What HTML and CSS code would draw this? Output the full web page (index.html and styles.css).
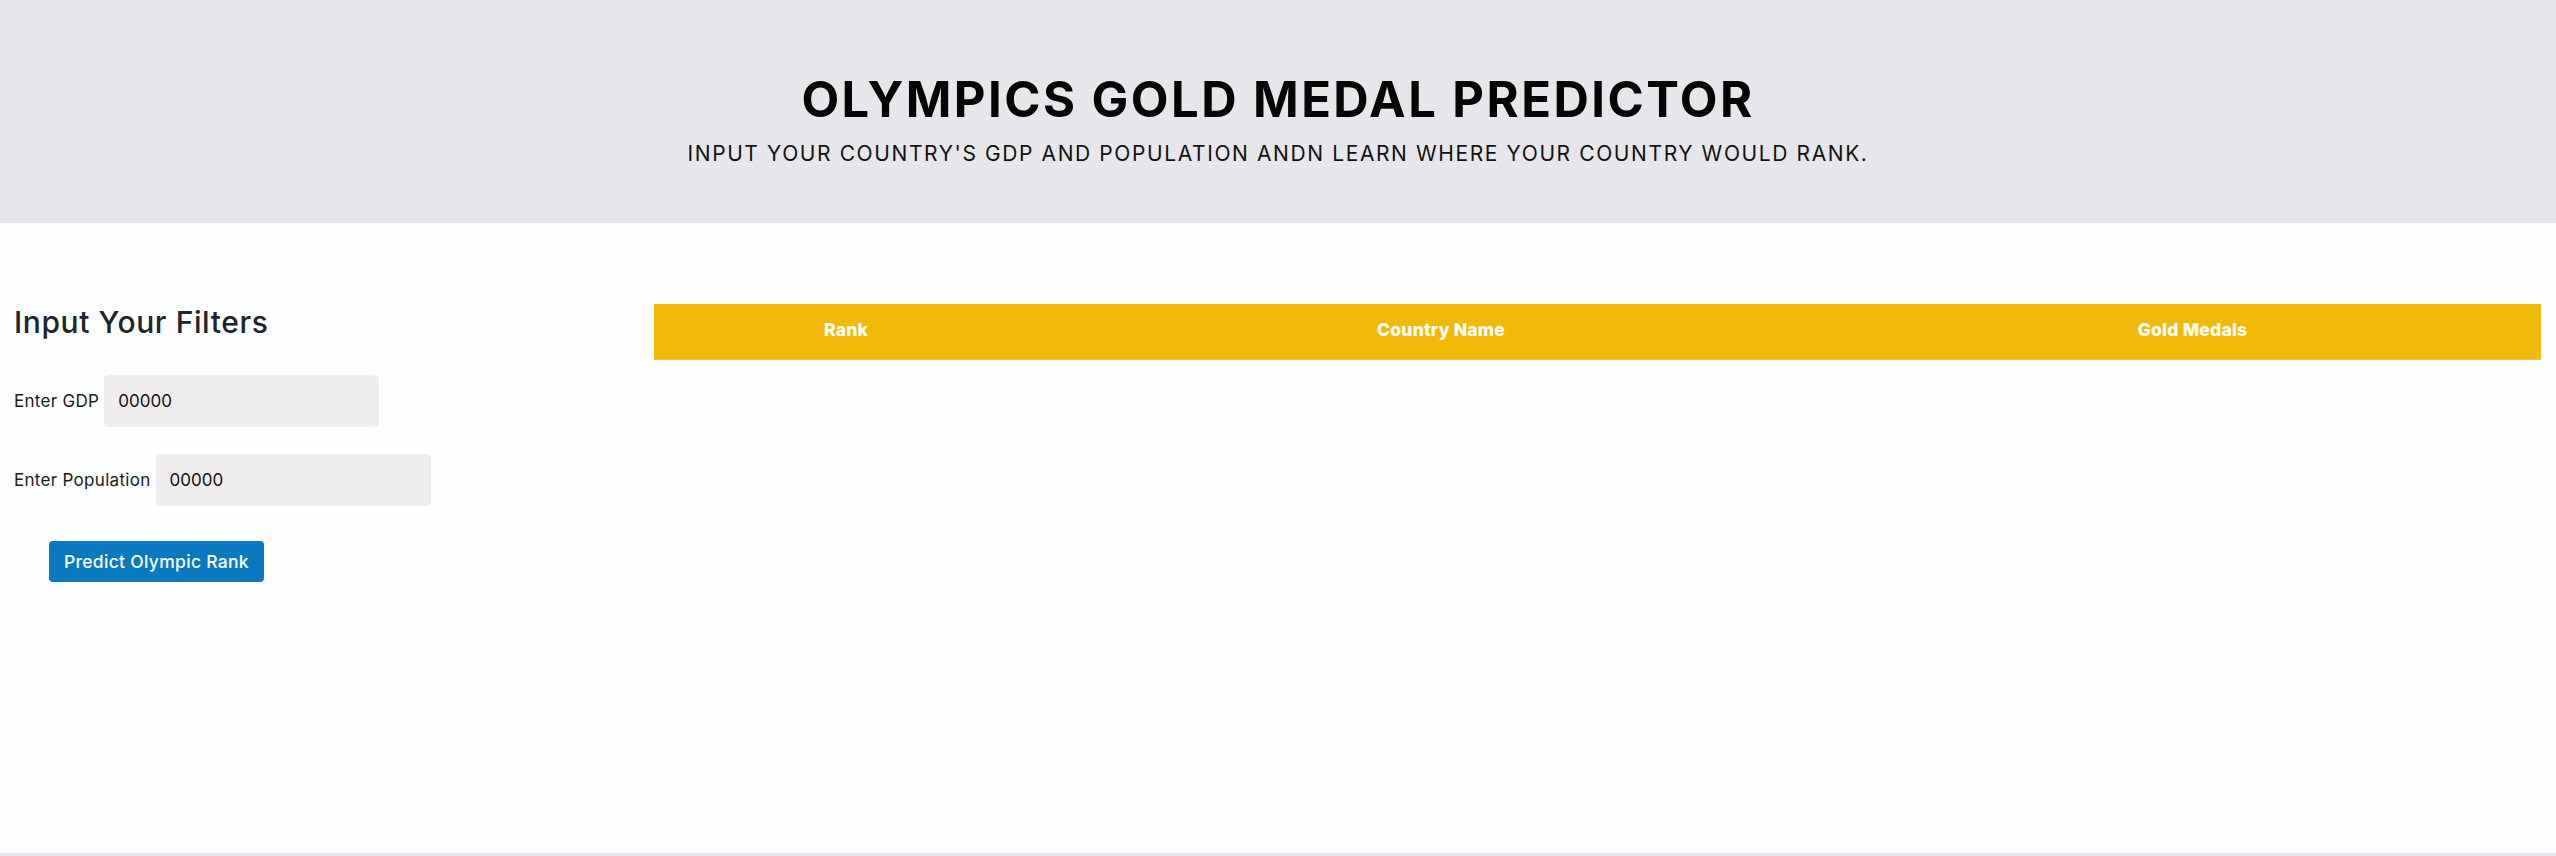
FILE: index.html
```html
<!DOCTYPE html>
<html lang="en">
<head>
<meta charset="utf-8">
<title>Olympics Gold Medal Predictor</title>
<link rel="stylesheet" href="styles.css">
</head>
<body>
<div class="page">
  <header class="hero">
    <h1 class="hero-title">OLYMPICS GOLD MEDAL PREDICTOR</h1>
    <p class="hero-sub">INPUT YOUR COUNTRY'S GDP AND POPULATION ANDN LEARN WHERE YOUR COUNTRY WOULD RANK.</p>
  </header>
  <main class="main">
    <section class="filters">
      <h2 class="filters-title">Input Your Filters</h2>
      <div class="field field-gdp">
        <label class="field-label" for="gdp">Enter GDP</label>
        <input class="field-input" id="gdp" type="text" value="00000">
      </div>
      <div class="field field-pop">
        <label class="field-label" for="pop">Enter Population</label>
        <input class="field-input" id="pop" type="text" value="00000">
      </div>
      <button class="predict-btn" type="button">Predict Olympic Rank</button>
    </section>
    <section class="results">
      <table class="rank-table">
        <thead>
          <tr>
            <th class="col-rank">Rank</th>
            <th class="col-country">Country Name</th>
            <th class="col-gold">Gold Medals</th>
          </tr>
        </thead>
        <tbody></tbody>
      </table>
    </section>
  </main>
  <footer class="foot"></footer>
</div>
</body>
</html>
```

FILE: styles.css
```css
* { box-sizing: border-box; }

html, body {
  margin: 0;
  padding: 0;
  height: 100%;
}

body {
  background: #fbfefd;
  font-family: Inter, "Open Sans", sans-serif;
  color: #1c1c1c;
}

.page {
  display: flex;
  flex-direction: column;
  min-height: 100vh;
}

.hero {
  background: #e7e7eb;
  padding: 75px 0 59px;
  text-align: center;
}

.hero-title {
  margin: 0;
  font-size: 49px;
  line-height: 49px;
  font-weight: 700;
  letter-spacing: 2.45px;
  color: #050505;
}

.hero-sub {
  margin: 19px 0 0;
  font-size: 21px;
  line-height: 21px;
  font-weight: 400;
  letter-spacing: 1.6px;
  color: #111;
}

.main {
  display: grid;
  grid-template-columns: 640px 1fr;
  padding: 81px 15px 0 14px;
}

.filters {
  display: flex;
  flex-direction: column;
  align-items: flex-start;
}

.filters-title {
  margin: 2.6px 0 0;
  font-size: 30px;
  line-height: 30px;
  font-weight: 500;
  letter-spacing: 0.6px;
  color: #212529;
}

.field {
  display: flex;
  align-items: center;
  gap: 5px;
}

.field-gdp { margin-top: 38px; }
.field-pop { margin-top: 27px; }

.field-label {
  font-size: 17px;
  letter-spacing: 0.3px;
  color: #1c1c1c;
}

.field-input {
  width: 275px;
  height: 52px;
  border: none;
  border-radius: 4px;
  background: #f0edf0;
  padding: 0 14px;
  font-family: inherit;
  font-size: 17px;
  color: #111;
  outline: none;
}

.predict-btn {
  margin: 35px 0 0 35px;
  width: 215px;
  height: 41px;
  border: none;
  border-radius: 4px;
  background: #0b79bf;
  color: #fff;
  font-family: inherit;
  font-size: 17.5px;
  font-weight: 500;
  letter-spacing: 0.3px;
  padding: 0;
}

.rank-table {
  width: 100%;
  border-collapse: collapse;
}

.rank-table thead tr {
  background: #f1ba09;
  border-bottom: 1px solid #ecc04a;
}

.rank-table th {
  height: 55px;
  padding: 0 0 4px;
  color: #fff;
  font-size: 17.5px;
  font-weight: 800;
  letter-spacing: 0.2px;
  text-align: center;
  vertical-align: middle;
}

.col-rank { width: 384px; }
.col-country { width: 806px; }
.col-gold { width: auto; }

.foot {
  margin-top: auto;
  height: 3px;
  background: #e7e7eb;
}
```
